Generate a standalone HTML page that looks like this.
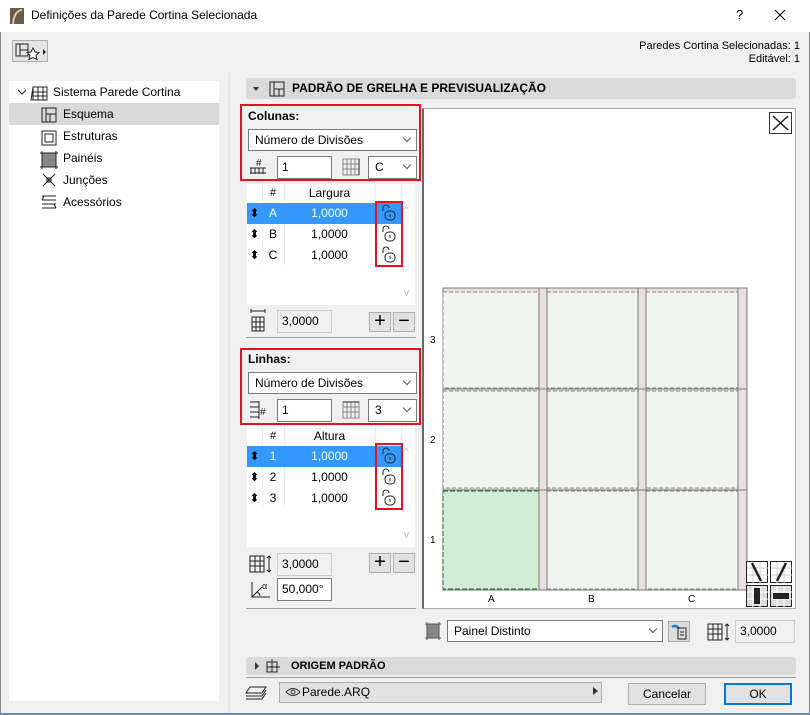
<!DOCTYPE html>
<html><head><meta charset="utf-8"><style>
*{box-sizing:border-box;margin:0;padding:0}
body{width:810px;height:715px;background:#f0f0f0;font-family:"Liberation Sans",sans-serif;font-size:12px;color:#000;position:relative;overflow:hidden}
.a{position:absolute}
.inp{position:absolute;background:#fff;border:1px solid #7a7a7a;padding:3px 4px;font-size:12px;line-height:14px}
.sel{position:absolute;background:#fff;border:1px solid #7a7a7a;padding:3px 6px;font-size:12px;line-height:14px}
.sel:after{content:"";position:absolute;right:6px;top:5px;width:5px;height:5px;border-right:1px solid #555;border-bottom:1px solid #555;transform:rotate(45deg)}
.red{position:absolute;border:2px solid #e81123}
.btn{position:absolute;background:#e1e1e1;border:1px solid #adadad;text-align:center;font-size:20px;line-height:16px}
.tbl{position:absolute;background:#fff}
.row{position:absolute;left:0;width:154px;height:21px;font-size:12px;line-height:21px}
.row span{position:absolute;text-align:center}
.sep{position:absolute;background:#a0a0a0;height:1px}
</style></head><body>
<div class="a" style="left:0;top:0;width:810px;height:32px;background:#fff"></div>
<svg class="a" style="left:10px;top:8px" width="14" height="16"><rect width="14" height="16" fill="#6b5a48"/><path d="M3 16 Q4 3 12 2" stroke="#d8c8b0" stroke-width="2" fill="none"/></svg>
<div class="a" style="left:31px;top:8px;font-size:12px">Definições da Parede Cortina Selecionada</div>
<div class="a" style="left:736px;top:7px;font-size:13px">?</div>
<svg class="a" style="left:774px;top:9px" width="12" height="12" stroke="#000"><path d="M1 1l10 10M11 1L1 11"/></svg>
<div class="a" style="left:0;top:32px;width:1px;height:683px;background:#888"></div>
<div class="a" style="left:809px;top:32px;width:1px;height:683px;background:#888"></div>
<div class="a" style="left:0;top:713px;width:810px;height:2px;background:#6a8aa8"></div>

<div class="a" style="left:12px;top:40px;width:36px;height:22px;border:1px solid #adadad;background:#e4e4e4"></div>
<svg class="a" style="left:14px;top:42px" width="34" height="20"><path d="M2 2h12v12H2zM6 2v12M6 8h8" stroke="#222" fill="none"/><path d="M19 6l2 4 4 .5-3 3 1 4-4-2-4 2 1-4-3-3 4-.5z" stroke="#222" fill="#fff"/><path d="M29 7l3 3-3 3z" fill="#222"/></svg>
<div class="a" style="right:10px;top:40px;text-align:right;font-size:11px;line-height:13px">Paredes Cortina Selecionadas: 1<br>Editável: 1</div>

<div class="a" style="left:9px;top:81px;width:210px;height:620px;background:#fff"></div>
<div class="a" style="left:9px;top:103px;width:210px;height:22px;background:#d9d9d9"></div>
<svg class="a" style="left:14px;top:84px" width="210" height="130" fill="none" stroke="#222">
<path d="M4 6l4 4 4-4"/>
<path d="M19 3h14v13H17zM19 3v13M24 3v13M29 3v13M18 8h15M18 12h15"/>
<path d="M28 24h14v14H28zM32 24v14M32 30h10M36 30v8"/>
<path d="M28 47h14v14H28zM31 50h8v8h-8z"/>
<rect x="28" y="69" width="14" height="14" fill="#888"/><path d="M26 69h18M26 83h18M28 67v18M42 67v18"/>
<path d="M29 90l12 12M41 90l-12 12M33 94h4v4h-4z"/>
<path d="M28 112h14M28 116h14M28 120h14M28 124h14M30 112l-2 4M40 120l2 4"/>
</svg>
<div class="a" style="left:53px;top:85px">Sistema Parede Cortina</div>
<div class="a" style="left:63px;top:107px">Esquema</div>
<div class="a" style="left:63px;top:129px">Estruturas</div>
<div class="a" style="left:63px;top:151px">Painéis</div>
<div class="a" style="left:63px;top:173px">Junções</div>
<div class="a" style="left:63px;top:195px">Acessórios</div>

<div class="a" style="left:228px;top:73px;width:2px;height:640px;background:#e6e6e6"></div>
<div class="a" style="left:246px;top:78px;width:550px;height:21px;background:#dadada;border-radius:3px"></div>
<svg class="a" style="left:250px;top:80px" width="40" height="17" fill="none" stroke="#222"><path d="M3 7l3 4 3-4z" fill="#333" stroke="none"/><path d="M20 2h14v14H20zM24 2v14M24 9h10M29 9v7" /></svg>
<div class="a" style="left:292px;top:81px;font-weight:bold;font-size:12px">PADRÃO DE GRELHA E PREVISUALIZAÇÃO</div>

<!-- Colunas -->
<div class="red" style="left:240px;top:104px;width:181px;height:77px"></div>
<div class="a" style="left:248px;top:109px;font-weight:bold">Colunas:</div>
<div class="sel" style="left:248px;top:129px;width:169px;height:22px">Número de Divisões</div>
<svg class="a" style="left:249px;top:156px" width="20" height="20" fill="none" stroke="#222"><path d="M1 12h16M1 17h16M2 12v6M6 12v6M10 12v6M14 12v6"/><text x="7" y="10" font-size="10" fill="#222" stroke="none" font-family="Liberation Sans">#</text></svg>
<div class="inp" style="left:277px;top:156px;width:55px;height:23px">1</div>
<svg class="a" style="left:342px;top:158px" width="18" height="18" fill="none" stroke="#888"><path d="M1 1h16v16H1zM5 1v16M9 1v16M13 1v16M1 6h16M1 11h16"/><path d="M17 1v16" stroke="#222"/></svg>
<div class="sel" style="left:368px;top:156px;width:49px;height:23px">C</div>

<div class="tbl" style="left:247px;top:184px;width:168px;height:121px"></div>
<div class="a" style="left:262px;top:184px;width:1px;height:81px;background:#eee"></div>
<div class="a" style="left:284px;top:184px;width:1px;height:81px;background:#eee"></div>
<div class="a" style="left:375px;top:184px;width:1px;height:81px;background:#eee"></div>
<div class="a" style="left:401px;top:184px;width:1px;height:81px;background:#eee"></div>
<div class="row" style="left:247px;top:183px;height:20px;line-height:20px"><span style="left:15px;width:22px;font-size:11px">#</span><span style="left:37px;width:91px">Largura</span></div>
<div class="a" style="left:247px;top:203px;width:154px;height:21px;background:#3399ff"></div>
<div class="row" style="left:247px;top:203px;color:#fff"><span style="left:0;width:15px;color:#000">⬍</span><span style="left:15px;width:22px">A</span><span style="left:37px;width:91px">1,0000</span></div>
<div class="row" style="left:247px;top:224px"><span style="left:0;width:15px">⬍</span><span style="left:15px;width:22px">B</span><span style="left:37px;width:91px">1,0000</span></div>
<div class="row" style="left:247px;top:245px"><span style="left:0;width:15px">⬍</span><span style="left:15px;width:22px">C</span><span style="left:37px;width:91px">1,0000</span></div>
<div class="red" style="left:375px;top:201px;width:28px;height:66px"></div>
<svg class="a" style="left:380px;top:204px" width="18" height="62" fill="none" stroke="#222"><g id="lk"><path d="M3 7V4a3 3 0 0 1 6 0"/><rect x="5" y="7" width="10" height="9" rx="4"/><path d="M10 10v3"/></g><use href="#lk" y="21"/><use href="#lk" y="42"/></svg>
<div class="a" style="left:404px;top:205px;color:#bbb;font-size:10px">^</div>
<div class="a" style="left:404px;top:288px;color:#bbb;font-size:10px">v</div>
<svg class="a" style="left:249px;top:309px" width="20" height="24" fill="none" stroke="#222"><path d="M2 2h14M2 0v4M16 0v4"/><path d="M3 8h12v14H3zM3 13h12M3 18h12M7 8v14M11 8v14"/></svg>
<div class="inp" style="left:277px;top:310px;width:55px;height:23px;background:#f0f0f0;border-color:#ccc">3,0000</div>
<div class="btn" style="left:369px;top:312px;width:22px;height:20px">+</div>
<div class="btn" style="left:393px;top:312px;width:22px;height:20px">−</div>
<div class="sep" style="left:246px;top:337px;width:170px"></div>

<!-- Linhas -->
<div class="red" style="left:240px;top:348px;width:181px;height:77px"></div>
<div class="a" style="left:248px;top:352px;font-weight:bold">Linhas:</div>
<div class="sel" style="left:248px;top:372px;width:169px;height:22px">Número de Divisões</div>
<svg class="a" style="left:249px;top:400px" width="22" height="20" fill="none" stroke="#222"><path d="M10 1v18M1 2h9M1 7h9M1 12h9M1 17h9"/><text x="11" y="15" font-size="10" fill="#222" stroke="none" font-family="Liberation Sans">#</text></svg>
<div class="inp" style="left:277px;top:399px;width:55px;height:23px">1</div>
<svg class="a" style="left:342px;top:401px" width="18" height="18" fill="none" stroke="#888"><path d="M1 1h16v16H1zM5 1v16M9 1v16M13 1v16M1 6h16M1 11h16"/><path d="M1 1h16" stroke="#222"/></svg>
<div class="sel" style="left:368px;top:399px;width:49px;height:23px">3</div>

<div class="tbl" style="left:247px;top:426px;width:168px;height:121px"></div>
<div class="a" style="left:262px;top:426px;width:1px;height:83px;background:#eee"></div>
<div class="a" style="left:284px;top:426px;width:1px;height:83px;background:#eee"></div>
<div class="a" style="left:375px;top:426px;width:1px;height:83px;background:#eee"></div>
<div class="a" style="left:401px;top:426px;width:1px;height:83px;background:#eee"></div>
<div class="row" style="left:247px;top:426px;height:20px;line-height:20px"><span style="left:15px;width:22px;font-size:11px">#</span><span style="left:37px;width:91px">Altura</span></div>
<div class="a" style="left:247px;top:446px;width:154px;height:21px;background:#3399ff"></div>
<div class="row" style="left:247px;top:446px;color:#fff"><span style="left:0;width:15px;color:#000">⬍</span><span style="left:15px;width:22px">1</span><span style="left:37px;width:91px">1,0000</span></div>
<div class="row" style="left:247px;top:467px"><span style="left:0;width:15px">⬍</span><span style="left:15px;width:22px">2</span><span style="left:37px;width:91px">1,0000</span></div>
<div class="row" style="left:247px;top:488px"><span style="left:0;width:15px">⬍</span><span style="left:15px;width:22px">3</span><span style="left:37px;width:91px">1,0000</span></div>
<div class="red" style="left:375px;top:443px;width:28px;height:67px"></div>
<svg class="a" style="left:380px;top:447px" width="18" height="62" fill="none" stroke="#222"><use href="#lk"/><use href="#lk" y="21"/><use href="#lk" y="42"/></svg>
<div class="a" style="left:404px;top:447px;color:#bbb;font-size:10px">^</div>
<div class="a" style="left:404px;top:530px;color:#bbb;font-size:10px">v</div>
<svg class="a" style="left:248px;top:554px" width="26" height="20" fill="none" stroke="#222"><path d="M2 2h14v16H2zM2 7h14M2 12h14M7 2v16M12 2v16M21 2v16M19 4l2-2 2 2M19 16l2 2 2-2"/></svg>
<div class="inp" style="left:277px;top:553px;width:55px;height:23px;background:#f0f0f0;border-color:#ccc">3,0000</div>
<div class="btn" style="left:369px;top:553px;width:22px;height:20px">+</div>
<div class="btn" style="left:393px;top:553px;width:22px;height:20px">−</div>
<svg class="a" style="left:249px;top:580px" width="24" height="20" fill="none" stroke="#222"><path d="M3 2v15h18M3 17l10-10"/><path d="M8 12a5 5 0 0 1 3 4" /><text x="13" y="9" font-size="9" fill="#222" stroke="none" font-family="Liberation Sans">α</text></svg>
<div class="inp" style="left:277px;top:578px;width:55px;height:23px">50,000°</div>
<div class="sep" style="left:246px;top:608px;width:170px"></div>

<!-- preview -->
<div class="a" style="left:422px;top:108px;width:374px;height:501px;background:#fff;border:1px solid #aaa;border-left:2px solid #666"></div>
<div class="a" style="left:769px;top:112px;width:23px;height:22px;border:1px solid #333;background:#fff"></div>
<svg class="a" style="left:769px;top:112px" width="23" height="22" stroke="#222" stroke-width="1.5"><path d="M4 4l15 14M19 4L4 18"/></svg>
<svg class="a" style="left:430px;top:285px" width="320" height="320" font-family="Liberation Sans" font-size="10">
<rect x="13" y="3" width="304" height="302" fill="#e8e0e0" stroke="#7a7a7a"/>
<g fill="#eff4f0" stroke="#888" stroke-dasharray="4 2">
<rect x="13" y="7" width="96" height="96"/><rect x="117" y="7" width="91" height="96"/><rect x="216" y="7" width="92" height="96"/>
<rect x="13" y="106" width="96" height="97"/><rect x="117" y="106" width="91" height="97"/><rect x="216" y="106" width="92" height="97"/>
<rect x="117" y="206" width="91" height="98"/><rect x="216" y="206" width="92" height="98"/>
</g>
<rect x="13" y="206" width="96" height="98" fill="#d2edd5" stroke="#1a6b2a" stroke-dasharray="5 2"/>
<g stroke="#7a7a7a" fill="none"><path d="M109 3v302M117 3v302M208 3v302M216 3v302M308 3v302M13 104h304M13 205h304"/></g>
<text x="0" y="58">3</text><text x="0" y="158">2</text><text x="0" y="258">1</text>
<text x="58" y="317">A</text><text x="158" y="317">B</text><text x="258" y="317">C</text>
</svg>
<svg class="a" style="left:746px;top:561px" width="48" height="46" fill="none" stroke="#222">
<rect x="0.5" y="0.5" width="21" height="21" fill="#fff"/><path d="M1 7h21M1 14h21M7 1v21M14 1v21" stroke="#ccc"/><path d="M6 2l9 18" stroke-width="2.5"/>
<rect x="24.5" y="0.5" width="21" height="21" fill="#fff"/><path d="M25 7h21M25 14h21M31 1v21M38 1v21" stroke="#ccc"/><path d="M40 2l-9 18" stroke-width="2.5"/>
<rect x="0.5" y="24.5" width="21" height="21" fill="#ddd"/><path d="M1 31h21M1 38h21M7 25v21M14 25v21" stroke="#fff"/><rect x="8" y="27" width="6" height="16" fill="#222" stroke="none"/>
<rect x="24.5" y="24.5" width="21" height="21" fill="#ddd"/><path d="M25 31h21M25 38h21M31 25v21M38 25v21" stroke="#fff"/><rect x="27" y="32" width="16" height="6" fill="#222" stroke="none"/>
</svg>

<svg class="a" style="left:425px;top:622px" width="16" height="18" stroke="#555"><rect x="2" y="2" width="12" height="14" fill="#888"/><path d="M0 2h16M0 16h16M2 0v18M14 0v18"/></svg>
<div class="sel" style="left:447px;top:620px;width:216px;height:22px">Painel Distinto</div>
<div class="a" style="left:668px;top:621px;width:22px;height:21px;background:#dcdcdc;border:1px solid #aaa"></div>
<svg class="a" style="left:670px;top:623px" width="18" height="17" fill="none"><path d="M2 4q4-3 7 2" stroke="#1e7be0" stroke-width="2.5"/><path d="M8 5h8v11H8zM10 9h4M10 12h4" stroke="#222"/></svg>
<svg class="a" style="left:706px;top:622px" width="26" height="20" fill="none" stroke="#222"><path d="M2 2h14v16H2zM2 7h14M2 12h14M7 2v16M12 2v16M21 2v16M19 4l2-2 2 2M19 16l2 2 2-2"/></svg>
<div class="inp" style="left:735px;top:620px;width:60px;height:23px;background:#f0f0f0;border-color:#ccc">3,0000</div>

<div class="a" style="left:246px;top:657px;width:550px;height:18px;background:#dadada;border-radius:3px"></div>
<svg class="a" style="left:250px;top:658px" width="40" height="16" fill="none" stroke="#222"><path d="M5 4l4 4-4 4z" fill="#333" stroke="none"/><path d="M17 4h10v10H17zM22 1v13M17 9h13"/></svg>
<div class="a" style="left:291px;top:660px;font-weight:bold;font-size:11px">ORIGEM PADRÃO</div>
<div class="sep" style="left:246px;top:677px;width:550px"></div>
<svg class="a" style="left:244px;top:685px" width="24" height="18" fill="none" stroke="#222"><path d="M6 2h16l-4 6H2zM2 11h16l4-6M2 14h16l4-6"/></svg>
<div class="a" style="left:279px;top:682px;width:323px;height:21px;background:#e1e1e1;border:1px solid #adadad"></div>
<svg class="a" style="left:285px;top:687px" width="16" height="10" fill="none" stroke="#333"><path d="M1 5q7-7 14 0q-7 7-14 0z"/><circle cx="8" cy="5" r="2"/></svg>
<div class="a" style="left:302px;top:685px">Parede.ARQ</div>
<div class="a" style="left:593px;top:687px;border-left:5px solid #333;border-top:4px solid transparent;border-bottom:4px solid transparent"></div>
<div class="a" style="left:628px;top:683px;width:78px;height:22px;background:#e1e1e1;border:1px solid #adadad;text-align:center;line-height:20px">Cancelar</div>
<div class="a" style="left:724px;top:683px;width:68px;height:22px;background:#e1e1e1;border:2px solid #0078d7;text-align:center;line-height:18px">OK</div>
</body></html>
